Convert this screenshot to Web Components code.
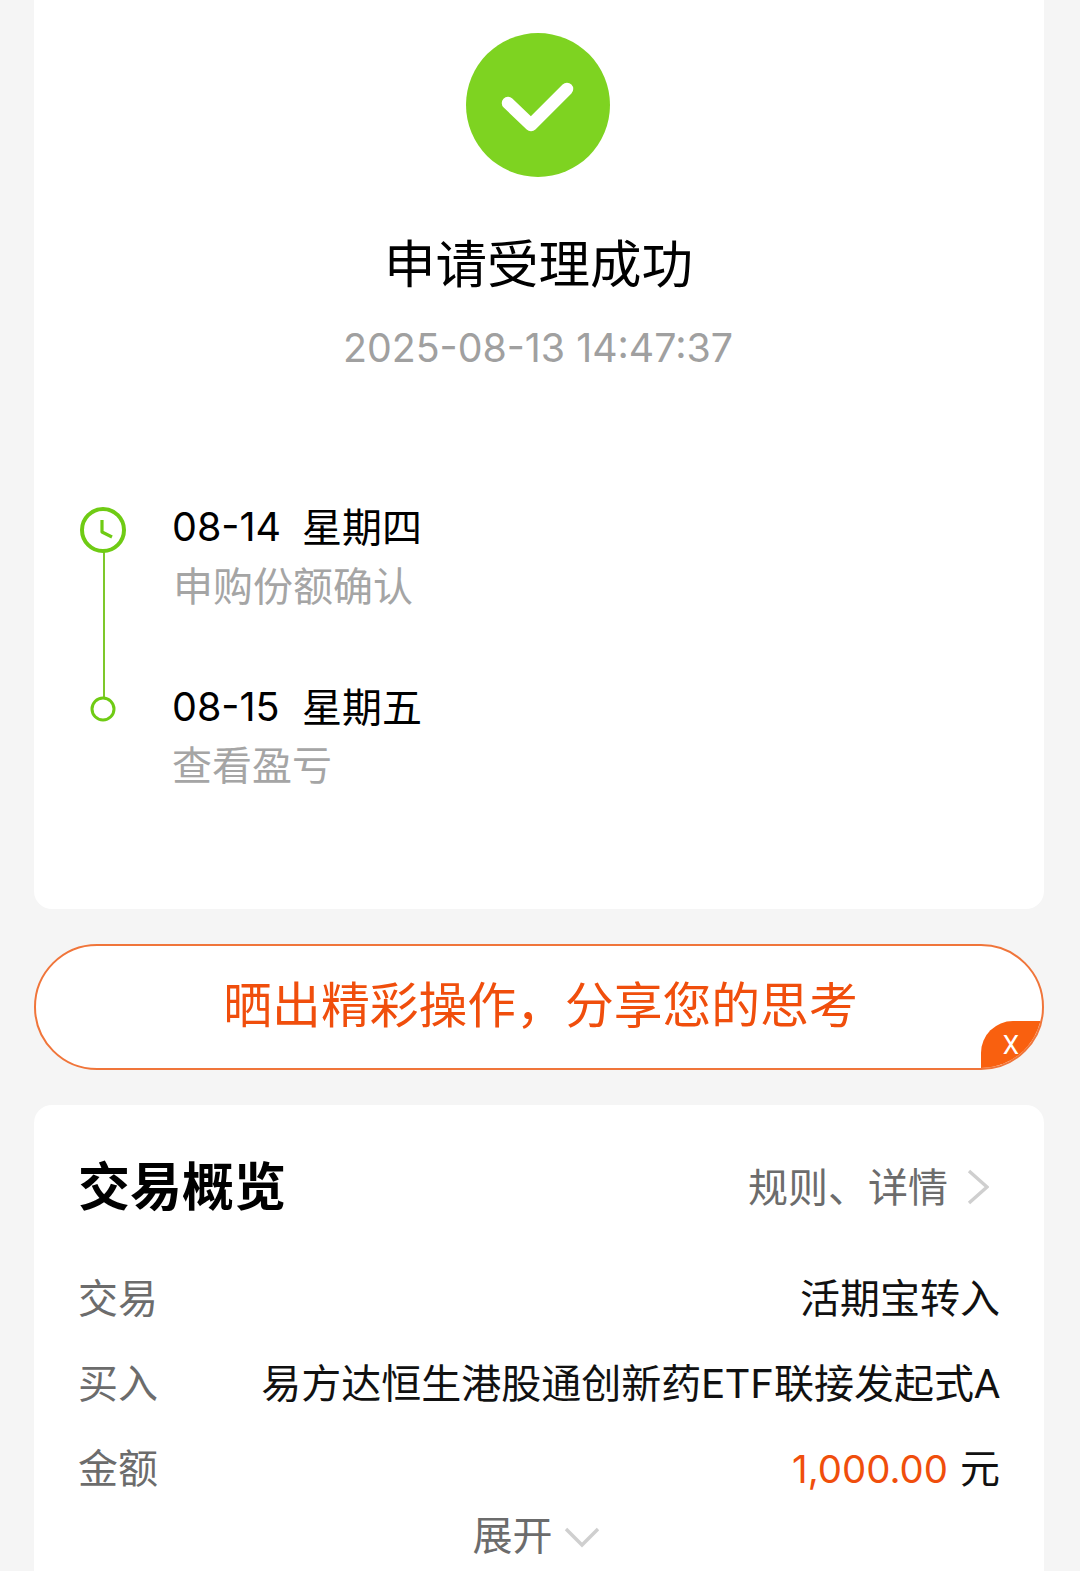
<!DOCTYPE html>
<html lang="zh-CN">
<head>
<meta charset="utf-8">
<title>申请受理成功</title>
<style>
html,body{margin:0;padding:0;height:1571px;overflow:hidden;background:#f5f5f5}
body{font-family:Roboto,"Noto Sans CJK SC",sans-serif;color:#000}
</style>
</head>
<body>
<order-page>
  <status-card>
    <time-step slot="steps" date="08-14" week="星期四" note="申购份额确认" kind="clock"></time-step>
    <time-step slot="steps" date="08-15" week="星期五" note="查看盈亏" kind="dot"></time-step>
  </status-card>
  <share-pill>晒出精彩操作，分享您的思考</share-pill>
  <overview-card>
    <info-row label="交易" slot="rows">活期宝转入</info-row>
    <info-row label="买入" slot="rows">易方达恒生港股通创新药<span style="letter-spacing:1.2px">ETF</span>联接发起式A</info-row>
    <info-row label="金额" slot="rows"><span style="color:#f04e0c;font-family:Inter,sans-serif;font-size:38.4px">1,000.00</span><span style="margin-left:12px">元</span></info-row>
  </overview-card>
</order-page>
<script>
function def(name, html){
  customElements.define(name, class extends HTMLElement{
    connectedCallback(){
      if(this.shadowRoot) return;
      const r=this.attachShadow({mode:'open'});
      r.innerHTML=typeof html==='function'?html(this):html;
    }
  });
}
def('order-page',`<style>
:host{display:flex;flex-direction:column;gap:35px;width:1010px;margin-left:34px}
</style><slot></slot>`);

def('status-card',`<style>
:host{display:flex;flex-direction:column;align-items:center;box-sizing:border-box;height:909px;background:#fff;border-radius:0 0 18px 18px;padding-top:33px}
svg{display:block;flex:none;margin-left:-2px}
h1{margin:53px 0 0;font-size:51.5px;line-height:72px;font-weight:400;color:#000;padding-right:1px}
.ts{margin-top:22px;font-family:Inter,sans-serif;font-size:39.3px;line-height:48px;color:#a0a0a0;padding-right:2px}
.steps{align-self:stretch;display:flex;flex-direction:column;gap:59px;margin-top:128px;padding-left:46px}
</style>
<svg width="144" height="144" viewBox="0 0 144 144"><circle cx="72" cy="72" r="72" fill="#7ed321"/><path d="M42 70 L65 92 L101 56" fill="none" stroke="#fff" stroke-width="12.5" stroke-linecap="round" stroke-linejoin="round"/></svg>
<h1>申请受理成功</h1>
<div class="ts">2025-08-13 14:47:37</div>
<div class="steps"><slot name="steps"></slot></div>`);

def('time-step',h=>{
 const clock=h.getAttribute('kind')==='clock';
 const icon=clock?`<svg class="ic" width="46" height="46" viewBox="0 0 46 46"><circle cx="23" cy="23" r="21" fill="#fff" stroke="#6fcb14" stroke-width="4"/><path d="M22 13 V25 L32 30" fill="none" stroke="#6fcb14" stroke-width="3.2" stroke-linejoin="round"/></svg><i></i>`
 :`<svg class="ic" width="26" height="26" viewBox="0 0 26 26"><circle cx="13" cy="13" r="11" fill="#fff" stroke="#6fcb14" stroke-width="3"/></svg>`;
 return `<style>
:host{display:grid;grid-template-columns:46px 1fr;column-gap:46px;position:relative;height:121px}
.ic{display:block;position:relative;z-index:1}
.mark{position:relative;display:flex;justify-content:center;align-items:flex-start;padding-top:${clock?'7px':'16px'}}
i{position:absolute;left:23px;top:52px;width:2px;height:148px;background:#7ec82a}
.d{display:flex;align-items:center;height:56px;color:#000;white-space:pre}
.dn{font-family:Inter,sans-serif;font-size:39.5px;width:130px;padding-bottom:2px}
.n{font-size:40px;line-height:58px;margin-top:${clock?'3px':'2px'};color:#a5a5a5;padding-left:${clock?'1px':'0'}}
.w{font-size:40px;padding-bottom:6px}
</style>
<div class="mark">${icon}</div>
<div><div class="d"><span class="dn">${h.getAttribute('date')}</span><span class="w">${h.getAttribute('week')}</span></div><div class="n">${h.getAttribute('note')}</div></div>`;
});

def('share-pill',`<style>
:host{display:flex;align-items:center;justify-content:center;position:relative;box-sizing:border-box;height:126px;background:#fff;border:2px solid #f0753a;border-radius:63px;font-size:48.8px;color:#f04e0c;overflow:hidden}
.x{position:absolute;right:-1px;bottom:-1px;width:62px;height:48px;background:#f9600f;border-radius:32px 0 32px 0;color:#fff;font-size:26px;line-height:48px;text-align:center;font-family:Roboto,sans-serif;box-sizing:border-box;padding-right:2px}
span.t{padding-left:3px;padding-bottom:11px}
</style><span class="t"><slot></slot></span><span class="x">X</span>`);

def('overview-card',`<style>
:host{display:block;box-sizing:border-box;height:520px;background:#fff;border-radius:18px 18px 0 0;padding:46px 44px 0 44px}
.head{display:flex;align-items:center;justify-content:space-between;height:72px}
h2{margin:0;font-size:52px;line-height:72px;font-weight:700;color:#000;padding:4px 0 0 0}
.more{display:flex;align-items:center;gap:19px;font-size:40px;color:#6c6c6c}
.more span{padding-bottom:4px}
svg{display:block}
.rows{margin-top:41px;display:flex;flex-direction:column;gap:21px}
.exp{display:flex;align-items:center;justify-content:center;gap:11px;font-size:40px;line-height:50px;color:#6c6c6c;margin-top:14px;padding-right:6px}
</style>
<div class="head"><h2>交易概览</h2><div class="more"><span>规则、详情</span><svg width="22" height="36" viewBox="0 0 22 36" style="margin-right:11px"><path d="M2 2 L20 18 L2 34" fill="none" stroke="#cfcfcf" stroke-width="3.4"/></svg></div></div>
<div class="rows"><slot name="rows"></slot></div>
<div class="exp"><span>展开</span><svg width="36" height="22" viewBox="0 0 36 22"><path d="M2 3 L18 19 L34 3" fill="none" stroke="#cfcfcf" stroke-width="3.4"/></svg></div>`);

def('info-row',h=>`<style>
:host{display:flex;justify-content:space-between;align-items:center;height:64px;font-size:40px;color:#111}
.l{color:#6c6c6c}
</style><span class="l">${h.getAttribute('label')}</span><span><slot></slot></span>`);
</script>
</body>
</html>
